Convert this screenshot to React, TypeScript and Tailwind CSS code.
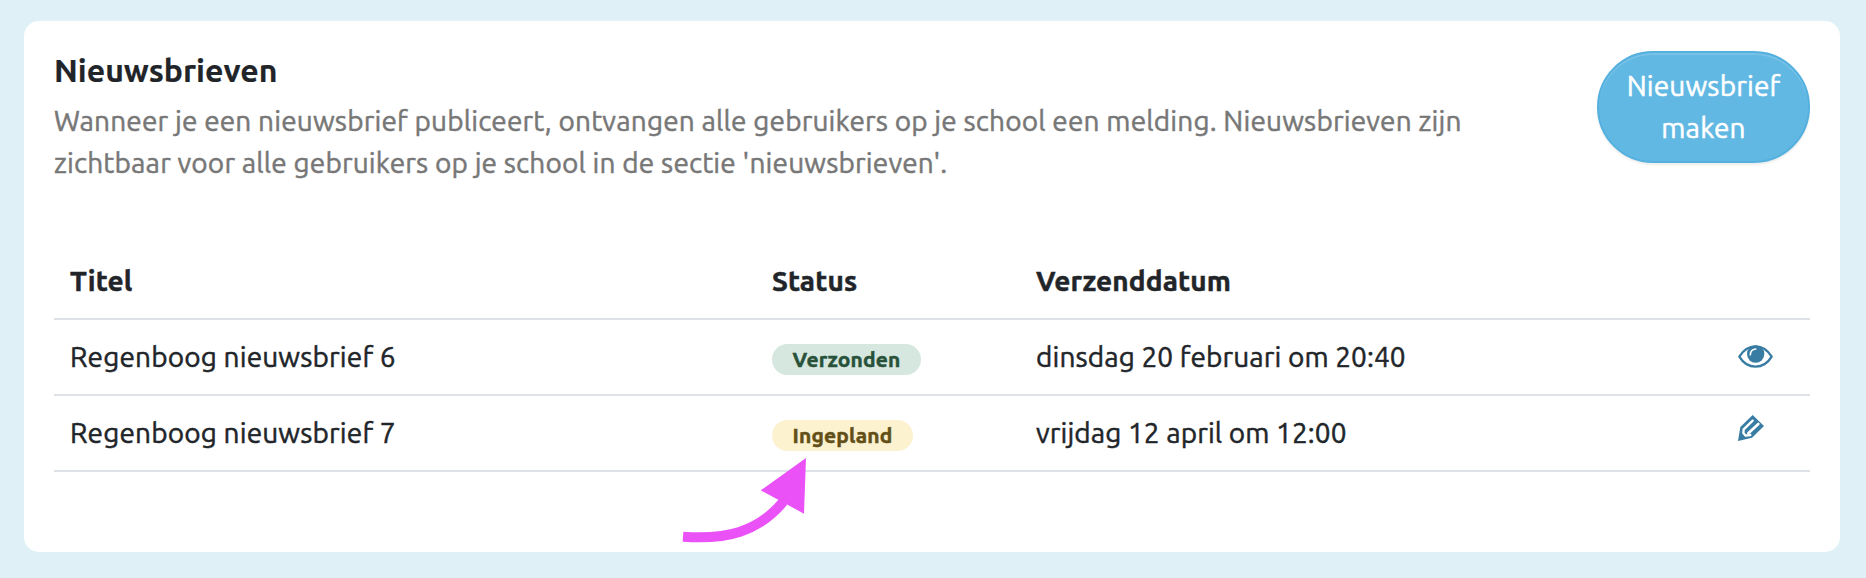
const newsletters = [
    { title: "Regenboog nieuwsbrief 6", status: "Verzonden", statusClass: "w-[149px] bg-[#d5e7de] text-[#28513a]", date: "dinsdag 20 februari om 20:40", sent: true },
    { title: "Regenboog nieuwsbrief 7", status: "Ingepland", statusClass: "w-[141px] bg-[#fdf2d0] text-[#624f17]", date: "vrijdag 12 april om 12:00", sent: false },
];

function EyeIcon() {
    return (
        <svg className="block w-[35px] h-[23px] -mt-[2px]" viewBox="0 0 105 69" fill="none">
            <path d="M4 35C16 15 34 4 52.500 4s36.500 11 48.500 31C89 55 71 65 52.500 65S16 55 4 35Z" stroke="#387ca3" strokeWidth="7" strokeLinejoin="round" />
            <circle cx="53" cy="27" r="26" fill="#387ca3" />
            <path d="M37 29c0-9 6-16 16-17" stroke="#fff" strokeWidth="5" strokeLinecap="round" />
        </svg>
    );
}

function PencilIcon() {
    return (
        <svg className="block w-[26px] h-[26px] -mt-[11px]" viewBox="0 0 78 78" fill="none">
            <path d="M44 0l34 33-36 35L0 78 7 36Z" fill="#387ca3" />
            <path d="M44 17L17 43l-1 11 7 8 14-2" stroke="#fff" strokeWidth="7" strokeLinejoin="round" strokeLinecap="round" />
            <path d="M61 27L31 55" stroke="#fff" strokeWidth="8" strokeLinecap="round" />
        </svg>
    );
}

function Arrow() {
    return (
        <svg className="absolute left-[680px] top-[455px] w-[130px] h-[92px]" viewBox="60 405 390 276" fill="none">
            <path d="M69 650C200 660 295 635 370 545" stroke="#ea52f8" strokeWidth="30" />
            <path d="M438 414L302 511l130 70Z" fill="#ea52f8" />
        </svg>
    );
}

export default function App() {
    return (
        <div className="relative h-[578px] bg-[#dff0f7] pt-[21px] px-6 pr-[26px] font-['Ubuntu','Noto_Sans',sans-serif] text-[28px] leading-[42px] tracking-[0.15px] text-[#212529] [-webkit-text-stroke:0.5px]">
            <main className="h-[531px] rounded-[15px] bg-white px-[30px] pt-[30px]">

                <header className="flex h-[192px] items-start justify-between">
                    <div className="whitespace-nowrap">
                        <h1 className="h-[49px] text-[32px] leading-[39px] font-semibold tracking-normal [-webkit-text-stroke:0.2px]"><span>Nieuwsbrieven</span></h1>
                        <p className="tracking-[0.165px] text-[#777]">
                            <span>Wanneer je een nieuwsbrief publiceert, ontvangen alle gebruikers op je school een melding. Nieuwsbrieven zijn</span>
                            <br />
                            <span>zichtbaar voor alle gebruikers op je school in de sectie 'nieuwsbrieven'.</span>
                        </p>
                    </div>
                    <button className="h-[112px] w-[213px] rounded-full border-2 border-[#54b0de] bg-[#61b8e3] text-white shadow-[inset_0_2px_0_rgba(255,255,255,0.15),0_2px_2px_rgba(0,0,0,0.075)]">
                        <span>Nieuwsbrief</span>
                        <br />
                        <span>maken</span>
                    </button>
                </header>

                <table className="w-full table-fixed whitespace-nowrap">
                    <thead>
                        <tr className="h-[76px] border-b-2 border-[#dee2e6] text-left">
                            <th className="w-[702px] pl-4"><span>Titel</span></th>
                            <th className="w-[264px] pl-4"><span>Status</span></th>
                            <th className="pl-4"><span>Verzenddatum</span></th>
                            <th className="w-[88px]"></th>
                        </tr>
                    </thead>
                    <tbody>
                        {newsletters.map((item) => (
                            <tr key={item.title} className="h-[76px] border-b-2 border-[#dee2e6]">
                                <td className="pl-4"><span>{item.title}</span></td>
                                <td className="pl-4">
                                    <div className={`mt-[4px] flex h-[31px] items-center justify-center rounded-full text-[21px] font-bold ${item.statusClass}`}>
                                        <span>{item.status}</span>
                                    </div>
                                </td>
                                <td className="pl-4 tracking-[0.1px]"><span>{item.date}</span></td>
                                <td className="pl-4">{item.sent ? <EyeIcon /> : <PencilIcon />}</td>
                            </tr>
                        ))}
                    </tbody>
                </table>

            </main>
            <Arrow />
        </div>
    );
}
